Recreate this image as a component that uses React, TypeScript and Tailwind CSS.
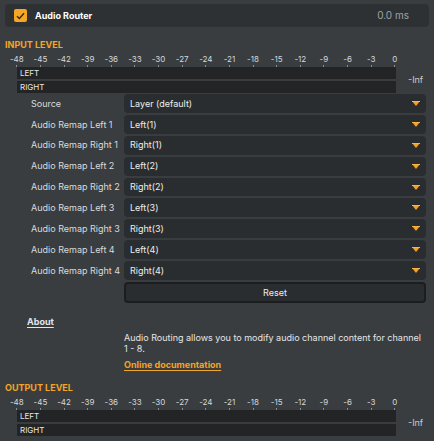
import React from "react";

const scale = ["-48","-45","-42","-39","-36","-33","-30","-27","-24","-21","-18","-15","-12","-9","-6","-3","0"];

function Meter() {
  return (
    <div className="flex flex-col">
      <div className="flex pl-[5px] h-[16px]">
        {scale.map((s) => (
          <div key={s} className="w-[23.625px] shrink-0 flex flex-col items-center">
            <span className="text-[8px] leading-[9px] text-[#d6d8da] mt-[4px]">{s}</span>
            <span className="w-px h-[2px] bg-[#8a8d90] mt-[1px]"></span>
          </div>
        ))}
      </div>
      <div className="flex items-center">
        <div className="flex flex-col gap-[2px] ml-[17px] w-[379px]">
          <div className="h-[12px] bg-[#232425] text-[8px] leading-[12px] text-[#e6e7e8] pl-[3px]">LEFT</div>
          <div className="h-[12px] bg-[#232425] text-[8px] leading-[12px] text-[#e6e7e8] pl-[3px]">RIGHT</div>
        </div>
        <span className="ml-[12px] text-[9px] text-[#c9cbcd]">-Inf</span>
      </div>
    </div>
  );
}

function Arrow() {
  return (
    <svg width="8" height="5" viewBox="0 0 8 5" className="block">
      <path d="M0 0 H8 L4 5 Z" fill="#f5a01e" />
      <rect x="0" y="0" width="8" height="1" fill="#f7b54a" />
    </svg>
  );
}

const rows: [string, string][] = [
  ["Source", "Layer (default)"],
  ["Audio Remap Left 1", "Left(1)"],
  ["Audio Remap Right 1", "Right(1)"],
  ["Audio Remap Left 2", "Left(2)"],
  ["Audio Remap Right 2", "Right(2)"],
  ["Audio Remap Left 3", "Left(3)"],
  ["Audio Remap Right 3", "Right(3)"],
  ["Audio Remap Left 4", "Left(4)"],
  ["Audio Remap Right 4", "Right(4)"],
];

export default function App() {
  return (
    <div
      className="w-[434px] h-[441px] bg-[#393d40] overflow-hidden text-[#e4e5e6]"
      style={{ fontFamily: "Inter, 'Noto Sans', sans-serif" }}
    >
      <div className="mx-[5px] mt-[4px] h-[23px] rounded-[4px] bg-[#2e3134] flex items-center pl-[9px] pr-[20px]">
        <div className="w-[13px] h-[13px] rounded-[2px] bg-[#f5a623] flex items-center justify-center">
          <svg width="9" height="8" viewBox="0 0 9 8">
            <path d="M1 4.2 L3.4 6.5 L8 1.2" stroke="#3a2a10" strokeWidth="1.4" fill="none" />
          </svg>
        </div>
        <span className="ml-[8px] text-[9px] font-bold text-white">Audio Router</span>
        <span className="ml-auto text-[10px] text-[#9fa2a5]">0.0 ms</span>
      </div>

      <div className="mt-[12px] pl-[5px] text-[9px] leading-[12px] font-bold text-[#f2a526]">INPUT LEVEL</div>
      <Meter />

      <div className="mt-[1px] flex flex-col gap-[2px]">
        {rows.map(([l, v]) => (
          <div key={l} className="flex items-center h-[18.9px]">
            <span className="w-[124px] pl-[31px] text-[9px] text-[#d9dadb] whitespace-nowrap">{l}</span>
            <div className="w-[302px] h-[18.9px] rounded-[4px] bg-[#2a2d2f] flex items-center pl-[6px] pr-[6px]">
              <span className="text-[9px] text-[#eceded]">{v}</span>
              <span className="ml-auto"><Arrow /></span>
            </div>
          </div>
        ))}
        <div className="flex h-[21px]">
          <div className="ml-[124px] w-[302px] h-[21px] rounded-[4px] bg-[#2a2d2f] border-2 border-[#1c1d1e] flex items-center justify-center text-[9px] text-[#eceded]">
            Reset
          </div>
        </div>
      </div>

      <div className="mt-[13px] pl-[27px] text-[9px] leading-[11px] font-bold text-[#e4e5e6] underline underline-offset-2">About</div>
      <div className="mt-[5px] pl-[124px] pr-[10px] text-[9px] leading-[11px] text-[#e4e5e6]">
        Audio Routing allows you to modify audio channel content for channel 1 - 8.
      </div>
      <div className="mt-[5px] pl-[124px] text-[9px] leading-[11px] font-bold text-[#f2a526] underline underline-offset-2">Online documentation</div>

      <div className="mt-[12px] pl-[5px] text-[9px] leading-[12px] font-bold text-[#f2a526]">OUTPUT LEVEL</div>
      <Meter />
    </div>
  );
}
